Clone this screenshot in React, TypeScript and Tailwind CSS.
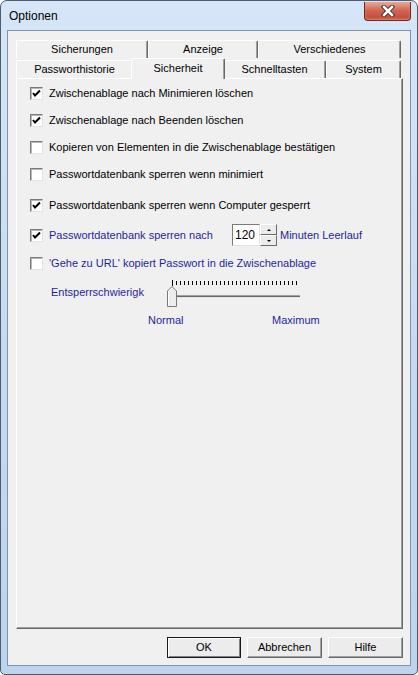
import React from "react";

const font = { fontFamily: '"Liberation Sans", Arial, sans-serif' };

const Check = ({ checked }: { checked?: boolean }) => (
  <div className="w-[13px] h-[13px] shrink-0 bg-white border border-t-[#7a7a7a] border-l-[#7a7a7a] border-r-[#e3e3e3] border-b-[#e3e3e3] shadow-[inset_1px_1px_0_#b8b8b8] flex items-center justify-center">
    {checked && (
      <svg width="9" height="9" viewBox="0 0 9 9">
        <polyline points="1,4 3,6.5 8,1.5" fill="none" stroke="#000" strokeWidth="2" />
      </svg>
    )}
  </div>
);

interface RowProps {
  label: string;
  checked?: boolean;
  blue?: boolean;
  className?: string;
}

const Row = ({ label, checked, blue, className }: RowProps) => (
  <div className={"flex items-center h-[13px] " + (className ?? "")}>
    <Check checked={checked} />
    <span className={"ml-[6px] whitespace-nowrap " + (blue ? "text-[#1f1f9c]" : "text-black")}>{label}</span>
  </div>
);

const Tab = ({ label, w }: { label: string; w: string }) => (
  <div
    className={
      w +
      " h-[18px] shrink-0 flex items-center justify-center bg-[#f0f0f0] border-t border-l border-r border-t-white border-l-white border-r-[#696969] shadow-[inset_-1px_0_0_#a0a0a0] rounded-tr-[2px]"
    }
  >
    {label}
  </div>
);

const Button = ({ label, def }: { label: string; def?: boolean }) => (
  <div
    className={
      "h-[21px] flex items-center justify-center bg-[#ececec] " +
      (def
        ? "w-[74px] border border-[#1a1a1a] shadow-[inset_1px_1px_0_#fff,inset_-1px_-1px_0_#808080]"
        : "w-[75px] border border-t-white border-l-white border-r-[#696969] border-b-[#696969] shadow-[inset_-1px_-1px_0_#a0a0a0]")
    }
  >
    {label}
  </div>
);

const Slider = () => {
  const ticks = Array.from({ length: 32 }, (_, i) => 8 + i * 4);
  return (
    <svg width="140" height="30" viewBox="0 0 140 30" className="shrink-0">
      {ticks.map((x, i) => (
        <line key={x} x1={x + 0.5} x2={x + 0.5} y1={i === 0 ? 1 : 2} y2={i === 0 ? 7 : 6} stroke="#000" strokeWidth="1" />
      ))}
      <rect x="8" y="16" width="128" height="1" fill="#a0a0a0" />
      <rect x="8" y="17" width="128" height="1" fill="#696969" />
      <rect x="8" y="18" width="128" height="1" fill="#e3e3e3" />
      <polygon points="3.5,12 8,7.5 12.5,12 12.5,27.5 3.5,27.5" fill="#ececec" stroke="#7a7a7a" strokeWidth="1" />
      <polyline points="4.5,27 4.5,12.5 8,9" fill="none" stroke="#fff" strokeWidth="1" />
    </svg>
  );
};

const SpinBox = () => (
  <div className="flex items-stretch h-[22px]">
    <div className="w-[28px] bg-white border border-t-[#7a7a7a] border-l-[#7a7a7a] border-r-[#e3e3e3] border-b-[#e3e3e3] flex items-center pl-[2px] text-[12px] text-black">
      120
    </div>
    <div className="w-[17px] flex flex-col">
      <div className="h-[11px] bg-[#ececec] border border-t-white border-l-white border-r-[#696969] border-b-[#696969] flex items-center justify-center">
        <div className="w-0 h-0 border-l-[2px] border-r-[2px] border-b-[2px] border-l-transparent border-r-transparent border-b-black" />
      </div>
      <div className="h-[11px] bg-[#ececec] border border-t-white border-l-white border-r-[#696969] border-b-[#696969] flex items-center justify-center">
        <div className="w-0 h-0 border-l-[2px] border-r-[2px] border-t-[2px] border-l-transparent border-r-transparent border-t-black" />
      </div>
    </div>
  </div>
);

export default function App() {
  return (
    <div
      style={font}
      className="w-[418px] h-[675px] flex flex-col border border-[#4e5d6e] rounded-t-[7px] rounded-b-[5px] bg-gradient-to-b from-[#d6e6f8] via-[#c6dbf2] to-[#bcd4ee] px-[6px] pb-[8px] text-[11px] leading-[13px] text-black overflow-hidden"
    >
      <div className="h-[29px] flex items-start justify-between shrink-0">
        <span className="text-[12px] mt-[9px] ml-[2px]">Optionen</span>
        <div className="w-[47px] h-[19px] mt-px rounded-b-[4px] border border-t-0 border-[#6b2a22] bg-gradient-to-b from-[#e8a898] via-[#d0614f] to-[#c04a36] shadow-[inset_0_-1px_2px_#e88a70] flex items-center justify-center">
          <svg width="14" height="12" viewBox="0 0 14 12">
            <path d="M3 2 L11 10 M11 2 L3 10" stroke="#4a3330" strokeWidth="4.5" strokeLinecap="square" />
            <path d="M3 2 L11 10 M11 2 L3 10" stroke="#fff" strokeWidth="2.5" strokeLinecap="square" />
          </svg>
        </div>
      </div>

      <div className="flex-1 flex flex-col bg-[#f0f0f0] border border-[#7f93ad] pl-[8px] pt-[9px]">
        <div className="flex">
          <Tab label="Sicherungen" w="w-[132px]" />
          <Tab label="Anzeige" w="w-[110px]" />
          <Tab label="Verschiedenes" w="w-[143px]" />
        </div>
        <div className="flex items-end">
          <Tab label="Passworthistorie" w="w-[117px]" />
          <div className="relative z-10 w-[94px] h-[21px] mx-[-2px] mb-[-1px] shrink-0 flex items-start justify-center pt-[3px] bg-[#f0f0f0] border-t border-l border-r border-t-white border-l-white border-r-[#696969] shadow-[inset_-1px_0_0_#a0a0a0] rounded-t-[2px]">
            Sicherheit
          </div>
          <Tab label="Schnelltasten" w="w-[103px]" />
          <Tab label="System" w="w-[75px]" />
        </div>

        <div className="w-[387px] h-[551px] flex flex-col border border-t-white border-l-white border-r-[#696969] border-b-[#696969] shadow-[inset_-1px_-1px_0_#a0a0a0] pl-[13px]">
          <Row className="mt-[8px]" checked label="Zwischenablage nach Minimieren löschen" />
          <Row className="mt-[14px]" checked label="Zwischenablage nach Beenden löschen" />
          <Row className="mt-[14px]" label="Kopieren von Elementen in die Zwischenablage bestätigen" />
          <Row className="mt-[14px]" label="Passwortdatenbank sperren wenn minimiert" />
          <Row className="mt-[18px]" checked label="Passwortdatenbank sperren wenn Computer gesperrt" />
          <div className="mt-[12px] flex items-center h-[22px]">
            <Check checked />
            <span className="ml-[6px] w-[183px] whitespace-nowrap text-[#1f1f9c]">Passwortdatenbank sperren nach</span>
            <SpinBox />
            <span className="ml-[3px] text-[#1f1f9c]">Minuten Leerlauf</span>
          </div>
          <Row className="mt-[11px]" blue label="'Gehe zu URL' kopiert Passwort in die Zwischenablage" />

          <div className="mt-[9px] flex items-start pl-[21px]">
            <span className="w-[113px] mt-[7px] text-[#1f1f9c]">Entsperrschwierigk</span>
            <Slider />
          </div>
          <div className="mt-[5px] flex pl-[118px] text-[#1f1f9c]">
            <span className="w-[124px]">Normal</span>
            <span>Maximum</span>
          </div>
        </div>

        <div className="mt-[8px] w-[387px] flex justify-end gap-[6px]">
          <Button label="OK" def />
          <Button label="Abbrechen" />
          <Button label="Hilfe" />
        </div>
      </div>
    </div>
  );
}
